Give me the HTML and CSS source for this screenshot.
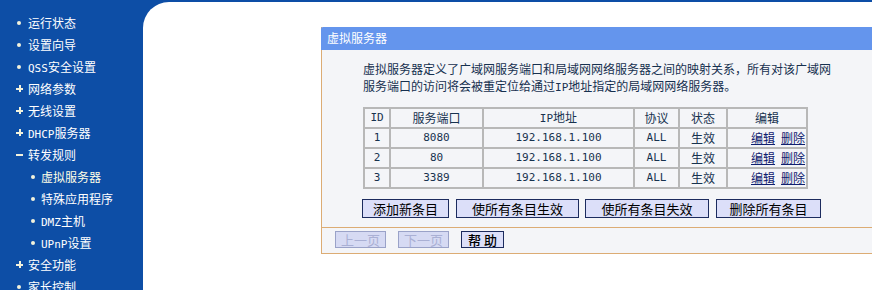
FILE: index.html
```html
<!DOCTYPE html>
<html lang="zh-CN">
<head>
<meta charset="utf-8">
<title>虚拟服务器</title>
<link rel="stylesheet" href="styles.css">
</head>
<body>
<div class="page">
  <nav class="sidebar">
    <ul class="menu">
      <li class="dot">运行状态</li>
      <li class="dot">设置向导</li>
      <li class="dot"><span class="a">QSS</span>安全设置</li>
      <li class="plus">网络参数</li>
      <li class="plus">无线设置</li>
      <li class="plus"><span class="a">DHCP</span>服务器</li>
      <li class="minus">转发规则</li>
      <li class="dot sub active">虚拟服务器</li>
      <li class="dot sub">特殊应用程序</li>
      <li class="dot sub"><span class="a">DMZ</span>主机</li>
      <li class="dot sub"><span class="a">UPnP</span>设置</li>
      <li class="plus">安全功能</li>
      <li class="dot">家长控制</li>
    </ul>
  </nav>
  <main class="main">
    <div class="canvas">
      <section class="panel">
        <div class="panel-title">虚拟服务器</div>
        <div class="panel-body">
          <p class="desc">虚拟服务器定义了广域网服务端口和局域网网络服务器之间的映射关系，所有对该广域网服务端口的访问将会被重定位给通过<span class="a">IP</span>地址指定的局域网网络服务器。</p>
          <table class="grid">
            <colgroup>
              <col class="c-id"><col class="c-port"><col class="c-ip"><col class="c-proto"><col class="c-state"><col class="c-edit">
            </colgroup>
            <thead>
              <tr><th class="a">ID</th><th>服务端口</th><th><span class="a">IP</span>地址</th><th>协议</th><th>状态</th><th>编辑</th></tr>
            </thead>
            <tbody>
              <tr><td class="a">1</td><td class="a">8080</td><td class="a">192.168.1.100</td><td class="a">ALL</td><td>生效</td><td class="ops"><a href="#">编辑</a><a href="#">删除</a></td></tr>
              <tr><td class="a">2</td><td class="a">80</td><td class="a">192.168.1.100</td><td class="a">ALL</td><td>生效</td><td class="ops"><a href="#">编辑</a><a href="#">删除</a></td></tr>
              <tr><td class="a">3</td><td class="a">3389</td><td class="a">192.168.1.100</td><td class="a">ALL</td><td>生效</td><td class="ops"><a href="#">编辑</a><a href="#">删除</a></td></tr>
            </tbody>
          </table>
          <div class="actions">
            <button class="btn w-add">添加新条目</button>
            <button class="btn w-on">使所有条目生效</button>
            <button class="btn w-off">使所有条目失效</button>
            <button class="btn w-del">删除所有条目</button>
          </div>
        </div>
        <div class="panel-foot">
          <button class="btn small disabled">上一页</button>
          <button class="btn small disabled">下一页</button>
          <button class="btn help">帮 助</button>
        </div>
      </section>
    </div>
  </main>
</div>
</body>
</html>
```
FILE: styles.css
```css
html, body {
  margin: 0;
  padding: 0;
  overflow: hidden;
  background: #0d4ea6;
}
body {
  font-family: "Noto Sans CJK SC", "Liberation Sans", sans-serif;
  font-size: 12px;
}
.a {
  font-family: "DejaVu Sans Mono", "Liberation Mono", monospace;
  font-size: 11px;
}
.page {
  display: flex;
  width: 872px;
  height: 290px;
}
.sidebar {
  width: 143px;
  flex: none;
  background: #0d4ea6;
}
.menu {
  list-style: none;
  margin: 0;
  padding: 12px 0 0 0;
}
.menu li {
  position: relative;
  height: 22px;
  line-height: 22px;
  padding-left: 28px;
  color: #ffffff;
  font-size: 12px;
  white-space: nowrap;
}
.menu li.sub {
  padding-left: 41px;
}
.menu li.active {
  color: #ffffe6;
}
.menu li::before {
  content: "";
  position: absolute;
  top: 9px;
  left: 17px;
  width: 4px;
  height: 4px;
  border-radius: 50%;
  background: #f2f2dc;
}
.menu li.sub::before {
  left: 31px;
}
.menu li.plus::before {
  top: 7px;
  left: 16px;
  width: 7px;
  height: 7px;
  border-radius: 0;
  background:
    linear-gradient(#f2f2dc, #f2f2dc) center / 7px 2px no-repeat,
    linear-gradient(#f2f2dc, #f2f2dc) center / 2px 7px no-repeat;
}
.menu li.minus::before {
  top: 10px;
  left: 16px;
  width: 7px;
  height: 2px;
  border-radius: 0;
  background: #f2f2dc;
}
.main {
  flex: 1;
  min-width: 0;
  background: #0d4ea6;
  padding-top: 2px;
  display: flex;
}
.canvas {
  flex: 1;
  background: #ffffff;
  border-top-left-radius: 26px;
  padding: 25px 0 0 178px;
}
.panel {
  width: 600px;
  border: 1px solid #dcac74;
  border-top: none;
  background: #f4f5f8;
}
.panel-title {
  height: 23px;
  line-height: 22px;
  background: #6495ed;
  color: #ffffff;
  padding-left: 6px;
  font-size: 12px;
  margin: 0 -1px;
  border-radius: 2px 0 0 0;
}
.panel-body {
  padding: 10px 0 9px 40px;
  border-bottom: 1px solid #dcac74;
}
.desc {
  margin: 0 0 11px 1px;
  width: 470px;
  color: #16304f;
  line-height: 17px;
  font-size: 12px;
}
.grid {
  border-collapse: collapse;
  border: 2px solid #b2b2b2;
  color: #17324f;
  font-size: 12px;
  margin-left: 1px;
}
.grid th, .grid td {
  border: 2px solid #b8b8b8;
  height: 18px;
  padding: 0;
  text-align: center;
  font-weight: normal;
  line-height: 16px;
}
.grid th {
  color: #17324f;
}
.grid td.ops {
  text-align: left;
  padding-left: 23px;
}
.c-id { width: 26px; }
.c-port { width: 93px; }
.c-ip { width: 151px; }
.c-proto { width: 45px; }
.c-state { width: 48px; }
.c-edit { width: 80px; }
.grid a {
  color: #10206e;
  text-decoration: underline;
}
.grid a + a {
  margin-left: 6px;
}
.actions {
  display: flex;
  gap: 7px;
  margin-top: 10px;
}
.btn {
  font-family: "Noto Sans CJK SC", sans-serif;
  font-size: 13px;
  height: 19px;
  line-height: 15px;
  padding: 0;
  background: #dcdff9;
  border: 1px solid #1c2b5e;
  color: #000000;
}
.w-add { width: 87px; }
.w-on { width: 123px; }
.w-off { width: 124px; margin-left: -1px; }
.w-del { width: 105px; }
.panel-foot {
  display: flex;
  gap: 12px;
  padding: 3px 0 5px 13px;
}
.btn.small {
  width: 51px;
  height: 17px;
}
.btn.disabled {
  background: #d6daf3;
  border-color: #9aa2c8;
  color: #aab0d4;
}
.btn.help {
  width: 43px;
  height: 17px;
  font-weight: 500;
  border-color: #1c2b5e;
}
```
